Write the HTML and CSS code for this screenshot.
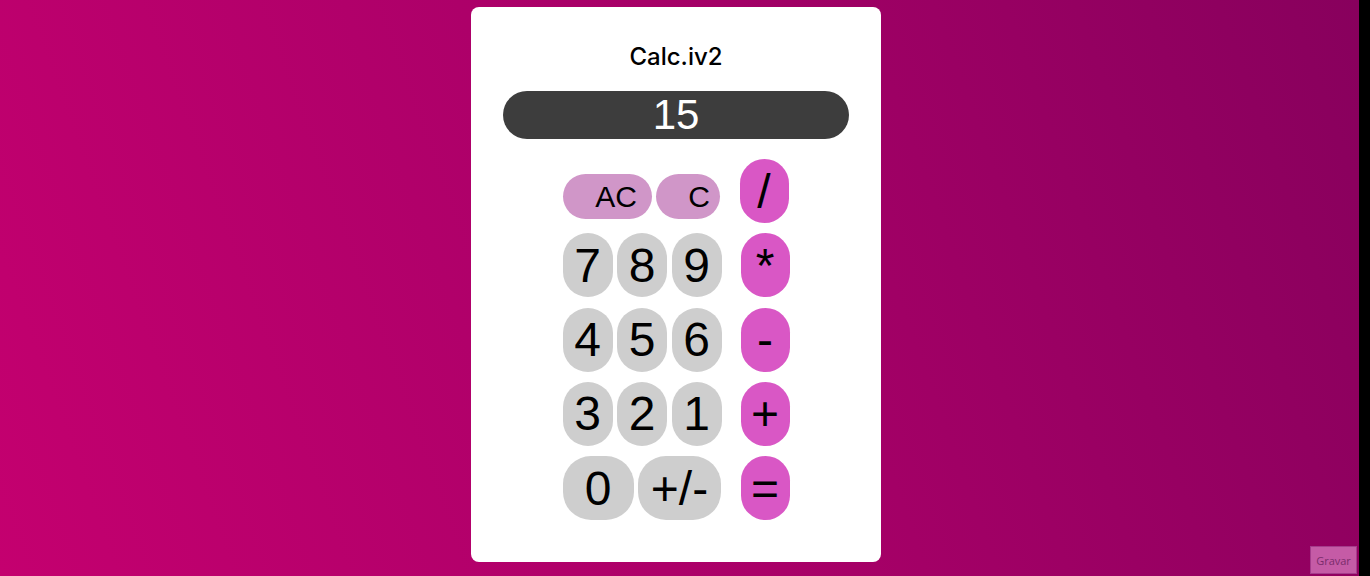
FILE: index.html
```html
<!DOCTYPE html>
<html lang="pt">
<head>
<meta charset="utf-8">
<title>Calc.iv2</title>
<link rel="stylesheet" href="styles.css">
</head>
<body>
<div class="page">
  <main class="card">
    <h1 class="title">Calc.iv2</h1>
    <div class="display">15</div>
    <div class="keypad">
      <div class="keys">
        <div class="row">
          <button class="key key-clear key-ac">AC</button>
          <button class="key key-clear key-c">C</button>
        </div>
        <div class="row">
          <button class="key key-num">7</button>
          <button class="key key-num">8</button>
          <button class="key key-num">9</button>
        </div>
        <div class="row">
          <button class="key key-num">4</button>
          <button class="key key-num">5</button>
          <button class="key key-num">6</button>
        </div>
        <div class="row">
          <button class="key key-num">3</button>
          <button class="key key-num">2</button>
          <button class="key key-num">1</button>
        </div>
        <div class="row">
          <button class="key key-num key-zero">0</button>
          <button class="key key-num key-sign">+/-</button>
        </div>
      </div>
      <div class="ops">
        <button class="key key-op key-div">/</button>
        <button class="key key-op">*</button>
        <button class="key key-op">-</button>
        <button class="key key-op">+</button>
        <button class="key key-op">=</button>
      </div>
    </div>
  </main>
</div>
<div class="strip"></div>
<button class="record">Gravar</button>
</body>
</html>
```
FILE: styles.css
```css
html, body {
  margin: 0;
  height: 100%;
}
body {
  display: flex;
  background: #000;
  overflow: hidden;
}
.page {
  flex: 1;
  display: flex;
  justify-content: center;
  align-items: flex-start;
  padding: 7px 7px 0 0;
  background: linear-gradient(70deg, #c4006f 0%, #a90068 50%, #88005d 100%);
}
.strip {
  width: 11px;
  background: #000;
}
.card {
  width: 410px;
  height: 555px;
  box-sizing: border-box;
  background: #fff;
  border-radius: 8px;
  display: flex;
  flex-direction: column;
  align-items: center;
  padding-top: 35px;
}
.title {
  margin: 0;
  font-family: Inter, "Noto Sans", sans-serif;
  font-weight: 500;
  font-size: 24px;
  line-height: 30px;
  color: #000;
}
.display {
  margin-top: 19px;
  width: 346px;
  height: 48px;
  border-radius: 24px;
  background: #3d3d3d;
  color: #fff;
  font-family: "Liberation Sans", Arial, sans-serif;
  font-size: 42px;
  line-height: 48px;
  text-align: center;
}
.keypad {
  margin-top: 20px;
  display: flex;
  gap: 19px;
}
.keys, .ops {
  display: flex;
  flex-direction: column;
  gap: 10.3px;
}
.row {
  display: flex;
  gap: 4.5px;
  height: 64px;
}
.key {
  border: none;
  padding: 0;
  margin: 0;
  font-family: "Liberation Sans", Arial, sans-serif;
  color: #000;
  line-height: normal;
  border-radius: 28px;
}
.key-num {
  width: 50px;
  height: 64px;
  font-size: 48px;
  background: #cecece;
}
.key-zero { width: 71px; }
.key-sign { width: 83px; }
.key-clear {
  height: 45px;
  align-self: flex-end;
  margin-bottom: 4px;
  font-size: 30px;
  background: #d096c8;
  border-radius: 23px;
}
.key-ac {
  width: 89px;
  padding-left: 18px;
}
.key-c {
  width: 64px;
  padding-left: 22px;
}
.key-op {
  width: 49px;
  height: 64px;
  font-size: 48px;
  background: #d957c5;
  border-radius: 25px;
}
.key-div {
  margin-left: -1px;
}
.record {
  position: fixed;
  right: 13px;
  bottom: 2px;
  width: 47px;
  height: 28px;
  padding: 0;
  background: #c55ba6;
  border: 1px solid #a53c8c;
  color: #7a2c6c;
  font-family: "Open Sans", "Noto Sans", sans-serif;
  font-size: 11px;
}
```
